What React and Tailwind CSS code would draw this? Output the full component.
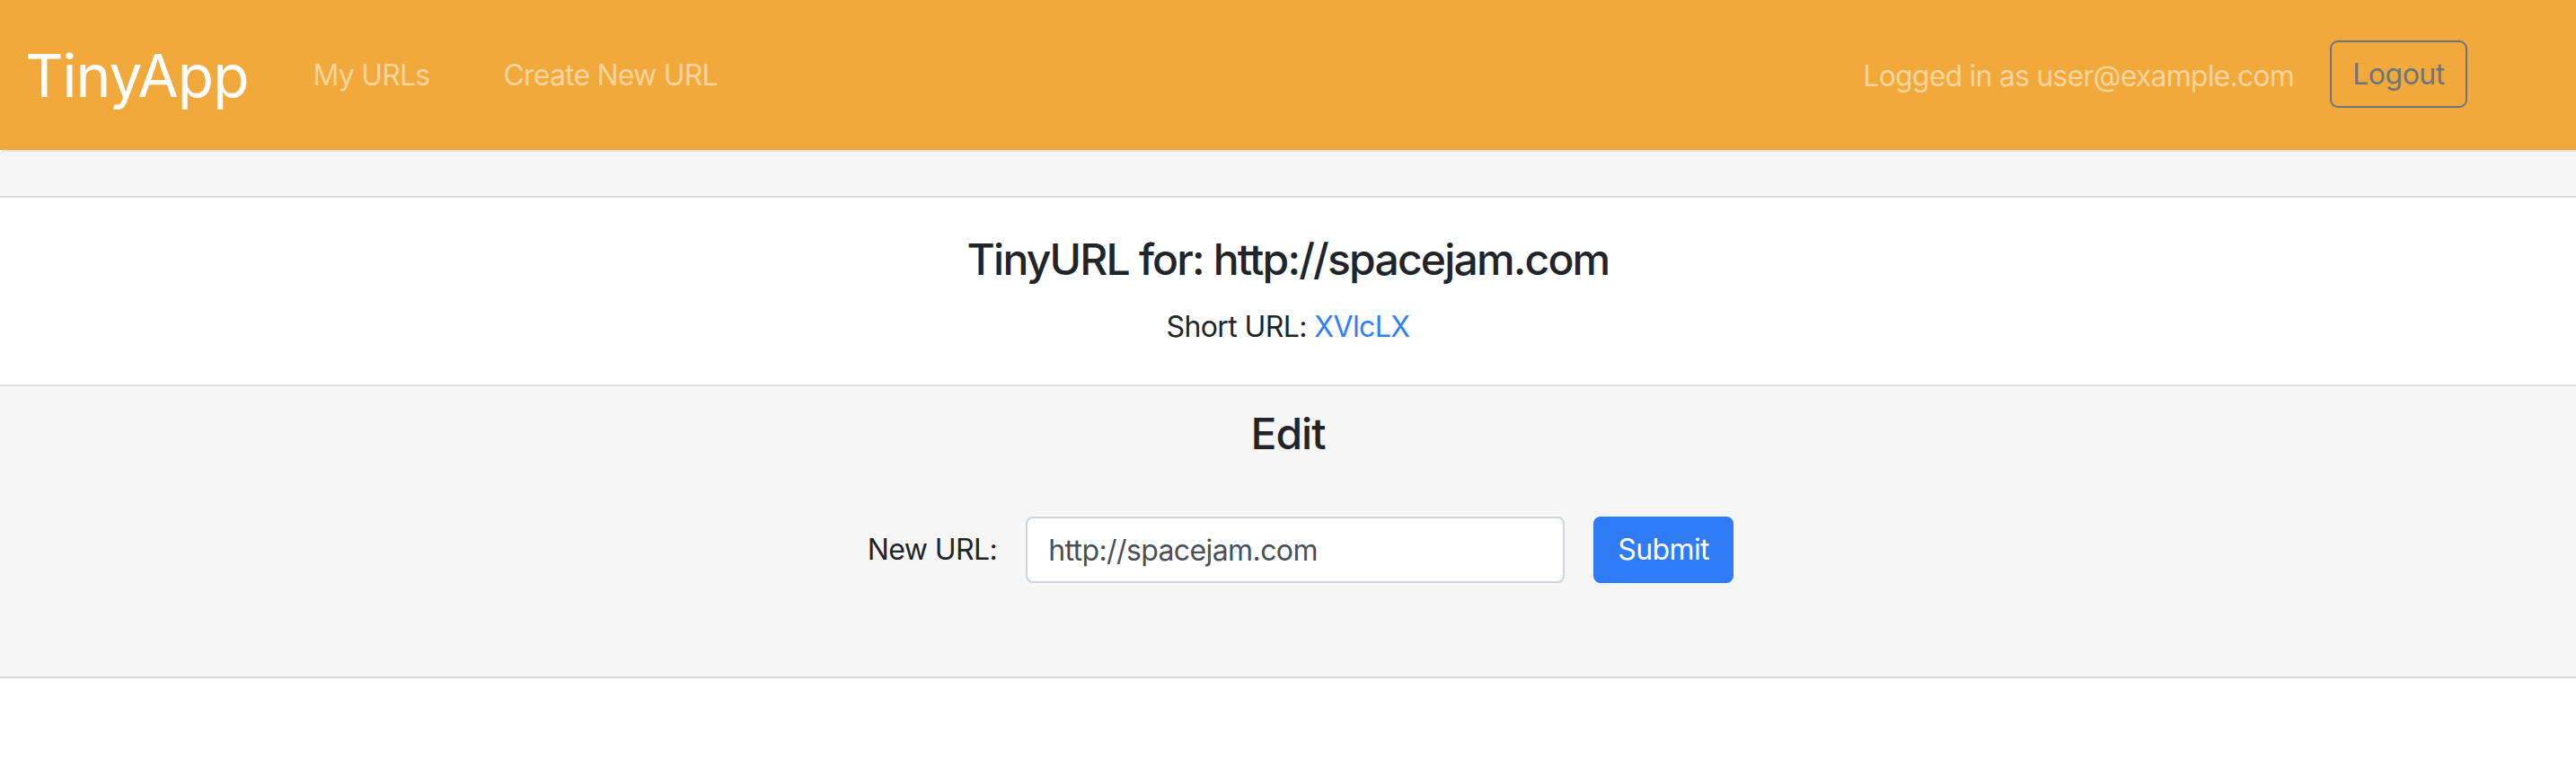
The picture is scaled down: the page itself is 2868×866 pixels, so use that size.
export default function App() {
  return (
    <div className="min-h-screen bg-white text-[#212529]" style={{ fontFamily: 'Inter, "Noto Sans", sans-serif' }}>
      {/* Navbar */}
      <nav className="h-[167px] bg-[#f2a93b] flex items-center pl-[28px] pr-[121px]">
        <a className="text-[66px] text-white leading-none tracking-[-1px]">TinyApp</a>
        <div className="flex items-center ml-[72px] gap-[82px] text-[32px] tracking-[-0.8px] text-[#f9d49c]">
          <a>My URLs</a>
          <a>Create New URL</a>
        </div>
        <div className="ml-auto flex items-center gap-[40px] pt-[2px]">
          <span className="text-[32px] tracking-[-0.8px] text-[#f9d49c]">Logged in as user@example.com</span>
          <button className="w-[153px] h-[75px] -mt-[4px] border-2 border-[#6c757d] rounded-[9px] text-[32px] tracking-[-0.5px] text-[#6c757d]">
            Logout
          </button>
        </div>
      </nav>

      {/* Light strip */}
      <div className="h-[53px] bg-[#f6f6f6] border-t-2 border-t-[#e4e4e4] border-b-2 border-b-[#d8d8d8] rounded-tl-[6px]" />

      {/* Short URL info */}
      <section className="pt-[40px] pb-[40px] text-center border-b-2 border-[#dedede]">
        <h4 className="text-[48px] font-medium leading-[1.2] tracking-[-1.8px]">TinyURL for: http://spacejam.com</h4>
        <p className="mt-[22px] text-[32px] leading-[1.5] tracking-[-0.6px]">
          Short URL: <a className="text-[#2f7ff7]">XVlcLX</a>
        </p>
      </section>

      {/* Edit */}
      <section className="bg-[#f6f6f6] pt-[24px] pb-[104px] border-b-2 border-[#d6d6d6]">
        <h4 className="text-center text-[48px] font-medium leading-[1.2] tracking-[-1px]">Edit</h4>
        <form className="mt-[64px] flex items-center justify-center pl-[28px] gap-[32px]">
          <label className="text-[32px] tracking-[-0.6px]">New URL:</label>
          <input
            className="w-[600px] h-[74px] bg-white border-2 border-[#ced4da] rounded-[8px] px-[23px] text-[32px] tracking-[-0.6px] text-[#495057] outline-none"
            defaultValue="http://spacejam.com"
          />
          <button type="button" className="w-[156px] h-[74px] bg-[#2f7cf6] rounded-[8px] text-[32px] tracking-[-0.6px] text-white">
            Submit
          </button>
        </form>
      </section>
    </div>
  )
}
